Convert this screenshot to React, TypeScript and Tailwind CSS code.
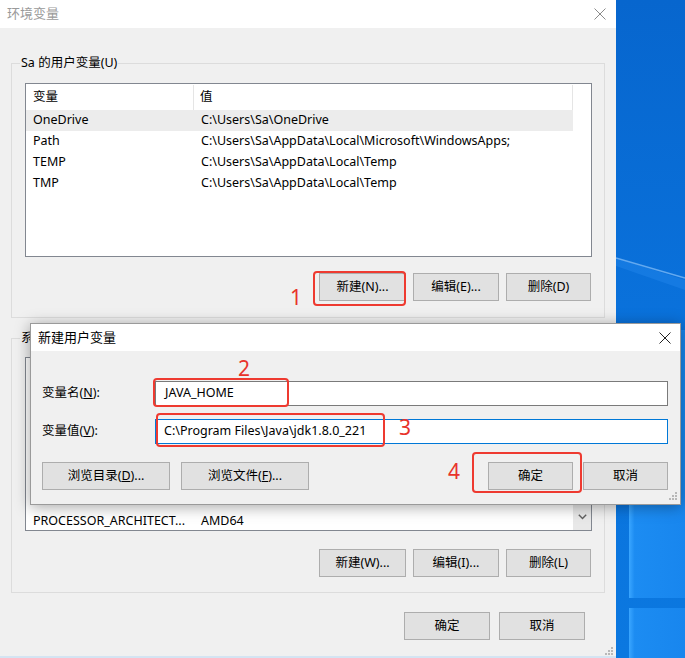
import type { ReactNode } from "react";

const userVars = [
  { name: "OneDrive", value: "C:\\Users\\Sa\\OneDrive" },
  { name: "Path", value: "C:\\Users\\Sa\\AppData\\Local\\Microsoft\\WindowsApps;" },
  { name: "TEMP", value: "C:\\Users\\Sa\\AppData\\Local\\Temp" },
  { name: "TMP", value: "C:\\Users\\Sa\\AppData\\Local\\Temp" },
];

// only the last row shows below the child dialog
const systemVars = [{ name: "PROCESSOR_ARCHITECT...", value: "AMD64" }];

const Btn = ({ children, w = "w-[86px]" }: { children: ReactNode; w?: string }) => (
  <div className={`${w} h-[28px] flex items-center justify-center bg-[#e1e1e1] border border-[#adadad] text-[12.5px] text-black`}>
    {children}
  </div>
);

const CloseIcon = ({ color }: { color: string }) => (
  <svg width="12" height="12" viewBox="0 0 12 12">
    <path d="M0.5 0.5 L11.5 11.5 M11.5 0.5 L0.5 11.5" stroke={color} strokeWidth="1" />
  </svg>
);

const Grip = () => (
  <svg width="10" height="10" viewBox="0 0 10 10" fill="#b8b8b8">
    <rect x="7" y="1" width="2" height="2" />
    <rect x="4" y="4" width="2" height="2" />
    <rect x="7" y="4" width="2" height="2" />
    <rect x="1" y="7" width="2" height="2" />
    <rect x="4" y="7" width="2" height="2" />
    <rect x="7" y="7" width="2" height="2" />
  </svg>
);

const GroupLabel = ({ children }: { children: ReactNode }) => (
  <div className="-mt-[10px] ml-[8px] px-[1px] w-fit bg-[#f0f0f0] text-[12.5px] leading-[18px] text-black">
    {children}
  </div>
);

const Mark = ({ className }: { className: string }) => (
  <div className={`absolute border-[2px] border-[#ee3a30] rounded-[4px] ${className}`} />
);

const Num = ({ n, className }: { n: string; className: string }) => (
  <div className={`absolute text-[21px] leading-none text-[#e8332b] ${className}`}>{n}</div>
);

export default function App() {
  return (
    <div className="relative w-[685px] h-[658px] overflow-hidden flex font-['Noto_Sans','Noto_Sans_CJK_SC',sans-serif]">
      {/* 环境变量 main dialog */}
      <div className="w-[616px] h-full flex flex-col bg-[#f0f0f0] border-b-[2px] border-[#d4e4f2]">
        <div className="h-[30px] bg-white flex items-center justify-between pl-[7px] pr-[10px]">
          <span className="text-[13px] text-[#9a9a9a]">环境变量</span>
          <CloseIcon color="#8a8a8a" />
        </div>

        <div className="flex flex-col px-[11px] pt-[35px]">
          {/* user vars group */}
          <div className="h-[255px] border border-[#dcdcdc] flex flex-col">
            <GroupLabel>Sa 的用户变量(U)</GroupLabel>
            <div className="mt-[11px] ml-[13px] w-[567px] h-[174px] border border-[#828790] bg-white flex flex-col pt-[1px]">
              <div className="w-[547px] h-[25px] flex text-[12.5px] text-black border-r border-[#e5e5e5]">
                <div className="w-[168px] pl-[7px] flex items-center border-r border-[#e5e5e5]">变量</div>
                <div className="flex-1 pl-[6px] flex items-center">值</div>
              </div>
              {userVars.map((v, i) => (
                <div
                  key={v.name}
                  className={`w-[547px] h-[21px] flex items-center text-[12.5px] text-black ${i === 0 ? "bg-[#ececec]" : ""}`}
                >
                  <div className="w-[168px] pl-[7px]">{v.name}</div>
                  <div className="pl-[7px]">{v.value}</div>
                </div>
              ))}
            </div>
            <div className="mt-[16px] pr-[13px] flex justify-end gap-[7px]">
              <Btn w="w-[87px]">新建(N)...</Btn>
              <Btn>编辑(E)...</Btn>
              <Btn w="w-[85px]">删除(D)</Btn>
            </div>
          </div>

          {/* system vars group */}
          <div className="mt-[20px] h-[255px] border border-[#dcdcdc] flex flex-col">
            <GroupLabel>系统变量(S)</GroupLabel>
            <div className="mt-[10px] ml-[13px] w-[567px] h-[174px] border border-[#828790] bg-white flex overflow-hidden">
              <div className="w-[547px] flex flex-col justify-end -mb-[2px]">
                {systemVars.map((v) => (
                  <div key={v.name} className="h-[21px] shrink-0 flex items-center text-[12.5px] text-black">
                    <div className="w-[168px] pl-[7px] whitespace-nowrap">{v.name}</div>
                    <div className="pl-[7px] whitespace-nowrap">{v.value}</div>
                  </div>
                ))}
              </div>
              <div className="flex-1 bg-[#f0f0f0] flex flex-col justify-end">
                <div className="h-[26px] bg-[#e8e8e8] flex items-center justify-center">
                  <svg width="9" height="6" viewBox="0 0 9 6">
                    <path d="M0.8 0.8 L4.5 4.6 L8.2 0.8" stroke="#606060" strokeWidth="1.4" fill="none" />
                  </svg>
                </div>
              </div>
            </div>
            <div className="mt-[18px] pr-[13px] flex justify-end gap-[7px]">
              <Btn w="w-[87px]">新建(W)...</Btn>
              <Btn>编辑(I)...</Btn>
              <Btn w="w-[85px]">删除(L)</Btn>
            </div>
          </div>

          <div className="mt-[19px] pr-[20px] flex justify-end gap-[9px]">
            <Btn>确定</Btn>
            <Btn>取消</Btn>
          </div>
          <div className="mt-[6px] -mr-[9px] flex justify-end">
            <Grip />
          </div>
        </div>
      </div>

      {/* desktop wallpaper */}
      <div className="flex-1 h-full">
        <svg width="69" height="658" viewBox="0 0 69 658">
          <defs>
            <linearGradient id="bg" x1="0" y1="0" x2="0" y2="1">
              <stop offset="0" stopColor="#0766ce" />
              <stop offset="0.5" stopColor="#0a72dc" />
              <stop offset="1" stopColor="#0b78e0" />
            </linearGradient>
            <linearGradient id="pane" x1="0" y1="0" x2="1" y2="0">
              <stop offset="0" stopColor="#3aa6ff" />
              <stop offset="0.1" stopColor="#1c8cf2" />
              <stop offset="1" stopColor="#1886ee" />
            </linearGradient>
          </defs>
          <rect width="69" height="658" fill="url(#bg)" />
          <path d="M0 258 L69 280 L69 290 L0 266 Z" fill="#2a8cf0" opacity="0.35" />
          <path d="M0 258 L69 278" stroke="#9fd0ff" strokeWidth="1.5" opacity="0.6" />
          <rect x="13" y="330" width="56" height="268" fill="url(#pane)" />
          <rect x="13" y="608" width="56" height="50" fill="url(#pane)" />
        </svg>
      </div>

      {/* 新建用户变量 dialog */}
      <div className="absolute left-[30px] top-[323px] w-[651px] h-[182px] bg-[#f0f0f0] border border-[#9a9a9a] shadow-[0_2px_14px_rgba(0,0,0,0.35)] flex flex-col">
        <div className="h-[27px] bg-white flex items-center justify-between pl-[7px] pr-[9px]">
          <span className="text-[13px] text-black">新建用户变量</span>
          <CloseIcon color="#222" />
        </div>
        <div className="flex flex-col pl-[11px] pr-[12px] pt-[30px]">
          <div className="flex items-center h-[25px]">
            <div className="w-[113px] text-[12.5px] text-black">
              变量名(<u>N</u>):
            </div>
            <div className="flex-1 h-[25px] bg-white border border-[#7a7a7a] flex items-center pl-[9px] text-[12.5px] text-black">
              JAVA_HOME
            </div>
          </div>
          <div className="mt-[13px] flex items-center h-[25px]">
            <div className="w-[113px] text-[12.5px] text-black">
              变量值(<u>V</u>):
            </div>
            <div className="flex-1 h-[25px] bg-white border border-[#0078d7] flex items-center pl-[8px] text-[12.5px] text-black">
              C:\Program Files\Java\jdk1.8.0_221
            </div>
          </div>
          <div className="mt-[18px] flex items-center">
            <Btn w="w-[128px]">
              <span>浏览目录(<u>D</u>)...</span>
            </Btn>
            <div className="ml-[11px]">
              <Btn w="w-[128px]">
                <span>浏览文件(<u>F</u>)...</span>
              </Btn>
            </div>
            <div className="flex-1" />
            <Btn w="w-[85px]">确定</Btn>
            <div className="ml-[10px]">
              <Btn w="w-[85px]">取消</Btn>
            </div>
          </div>
          <div className="mt-[1px] -mr-[10px] flex justify-end">
            <Grip />
          </div>
        </div>
      </div>

      {/* annotations */}
      <Mark className="left-[313px] top-[271px] w-[93px] h-[35px]" />
      <Num n="1" className="left-[290px] top-[287px]" />
      <Mark className="left-[153px] top-[378px] w-[136px] h-[29px]" />
      <Num n="2" className="left-[238px] top-[358px]" />
      <Mark className="left-[156px] top-[413px] w-[229px] h-[34px]" />
      <Num n="3" className="left-[399px] top-[417px]" />
      <Mark className="left-[472px] top-[452px] w-[110px] h-[41px]" />
      <Num n="4" className="left-[448px] top-[461px]" />
    </div>
  );
}
